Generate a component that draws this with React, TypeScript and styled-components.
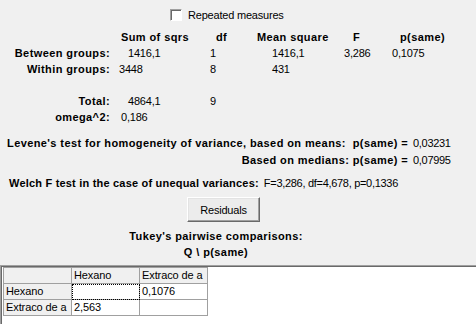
import styled, { createGlobalStyle } from "styled-components";

const GlobalStyle = createGlobalStyle`
  html, body {
    margin: 0;
    padding: 0;
    background: #f0f0f0;
  }
  body {
    font-family: "Liberation Sans", Arial, sans-serif;
    font-size: 11px;
    color: #000;
    letter-spacing: -0.3px;
  }
`;

// whole window: grey result panel on top, white grid pane at the bottom
const Window = styled.div`
  width: 476px;
  height: 324px;
  display: flex;
  flex-direction: column;
  overflow: hidden;
`;

const ResultsPanel = styled.div`
  flex: none;
  display: flex;
  flex-direction: column;
  padding-top: 7px;
`;

const CheckRow = styled.label`
  display: flex;
  align-items: center;
  gap: 6px;
  height: 16px;
  padding-left: 170px;
  margin-bottom: 6px;
  letter-spacing: -0.2px;
`;

const CheckBox = styled.span`
  width: 10px;
  height: 10px;
  background: #fff;
  border: 1px solid;
  border-color: #a0a0a0 #fff #fff #a0a0a0;
  box-shadow: inset 1px 1px 0 #696969;
`;

// ANOVA table laid out as a fixed-column grid
const StatsGrid = styled.div`
  display: grid;
  grid-template-columns: 119px 90px 47px 88px 48px 1fr;
  grid-auto-rows: 16px;
  align-items: center;
`;

const Bold = styled.span<{ $spacing?: number }>`
  font-weight: 700;
  letter-spacing: ${({ $spacing }) => $spacing ?? 0.4}px;
`;

const RowLabel = styled(Bold)`
  text-align: right;
  padding-right: 9px;
  white-space: nowrap;
`;

const Cell = styled.span<{ $indent?: number; $bold?: boolean }>`
  padding-left: ${({ $indent }) => $indent ?? 0}px;
  font-weight: ${({ $bold }) => ($bold ? 700 : 400)};
  letter-spacing: ${({ $bold }) => ($bold ? "0.4px" : "-0.2px")};
  white-space: nowrap;
`;

const TestBlock = styled.div`
  margin-top: 9px;
  display: grid;
  grid-template-columns: 413px auto;
  grid-auto-rows: 17px;
  align-items: center;
`;

const TestLabel = styled(Bold)`
  text-align: right;
  padding-right: 5px;
  white-space: pre;
`;

const WelchRow = styled.div`
  display: flex;
  align-items: center;
  gap: 5px;
  height: 16px;
  padding-left: 9px;
  margin-top: 7px;
  white-space: nowrap;
`;

const ButtonRow = styled.div`
  display: flex;
  padding-left: 187px;
  margin-top: 6px;
`;

const PushButton = styled.button`
  width: 73px;
  height: 25px;
  padding: 0;
  font: inherit;
  letter-spacing: -0.2px;
  color: #000;
  background: #ececec;
  border: 1px solid;
  border-color: #fff #696969 #696969 #fff;
  box-shadow: inset -1px -1px 0 #a0a0a0, inset 1px 1px 0 #e3e3e3;
`;

const TitleBlock = styled.div`
  width: 432px;
  margin-top: 6px;
  text-align: center;
  font-weight: 700;
  letter-spacing: 0.4px;
  line-height: 16px;
`;

// bottom pane with sunken border holding the comparison grid
const GridPane = styled.div`
  flex: 1;
  margin-top: 5px;
  background: #fff;
  border-top: 1px solid #a0a0a0;
  border-left: 1px solid #a0a0a0;
  box-shadow: inset 1px 1px 0 #696969;
  padding: 1px 0 0 1px;
`;

const Table = styled.table`
  border-collapse: collapse;
  table-layout: fixed;
  width: 196px;
  margin-left: 1px;
`;

const Td = styled.td<{ $fixed?: boolean; $focus?: boolean }>`
  width: 65px;
  height: 15px;
  padding: 0 0 0 2px;
  border: 1px solid #a0a0a0;
  background: ${({ $fixed }) => ($fixed ? "#f0f0f0" : "#fff")};
  outline: ${({ $focus }) => ($focus ? "1px dotted #000" : "none")};
  outline-offset: -1px;
  overflow: hidden;
  white-space: nowrap;
  text-overflow: clip;
  line-height: 15px;
  letter-spacing: -0.1px;
`;

const header = ["Sum of sqrs", "df", "Mean square", "F", "p(same)"];
const headerIndent = [2, 7, 1, 9, 8];

const rows: { label: string; cells: [string, number][] }[] = [
  { label: "Between groups:", cells: [["1416,1", 9], ["1", 1], ["1416,1", 16], ["3,286", 0], ["0,1075", 0]] },
  { label: "Within groups:", cells: [["3448", 0], ["8", 1], ["431", 16], ["", 0], ["", 0]] },
  { label: "", cells: [["", 0], ["", 0], ["", 0], ["", 0], ["", 0]] },
  { label: "Total:", cells: [["4864,1", 9], ["9", 1], ["", 0], ["", 0], ["", 0]] },
  { label: "omega^2:", cells: [["0,186", 2], ["", 0], ["", 0], ["", 0], ["", 0]] },
];

const groups = ["Hexano", "Extraco de a"];
const matrix = [
  ["", "0,1076"],
  ["2,563", ""],
];

export default function App() {
  return (
    <>
      <GlobalStyle />
      <Window>
        <ResultsPanel>
          <CheckRow>
            <CheckBox />
            Repeated measures
          </CheckRow>

          <StatsGrid>
            <span />
            {header.map((h, i) => (
              <Cell key={h} $bold $indent={headerIndent[i]}>
                {h}
              </Cell>
            ))}
            {rows.map((row, r) => [
              <RowLabel key={`l${r}`}>{row.label}</RowLabel>,
              ...row.cells.map(([v, indent], c) => (
                <Cell key={`c${r}-${c}`} $indent={indent}>
                  {v}
                </Cell>
              )),
            ])}
          </StatsGrid>

          <TestBlock>
            <TestLabel>
              {"Levene's test for homogeneity of variance, based on means:  p(same) ="}
            </TestLabel>
            <span>0,03231</span>
            <TestLabel>Based on medians: p(same) =</TestLabel>
            <span>0,07995</span>
          </TestBlock>

          <WelchRow>
            <Bold $spacing={0.2}>Welch F test in the case of unequal variances:</Bold>
            <span>F=3,286, df=4,678, p=0,1336</span>
          </WelchRow>

          <ButtonRow>
            <PushButton>Residuals</PushButton>
          </ButtonRow>

          <TitleBlock>
            <div>Tukey's pairwise comparisons:</div>
            <div>Q \ p(same)</div>
          </TitleBlock>
        </ResultsPanel>

        <GridPane>
          <Table>
            <tbody>
              <tr>
                <Td $fixed />
                {groups.map((g) => (
                  <Td key={g} $fixed>
                    {g}
                  </Td>
                ))}
              </tr>
              {groups.map((g, r) => (
                <tr key={g}>
                  <Td $fixed>{g}</Td>
                  {matrix[r].map((v, c) => (
                    <Td key={c} $focus={r === 0 && c === 0}>
                      {v}
                    </Td>
                  ))}
                </tr>
              ))}
            </tbody>
          </Table>
        </GridPane>
      </Window>
    </>
  );
}
